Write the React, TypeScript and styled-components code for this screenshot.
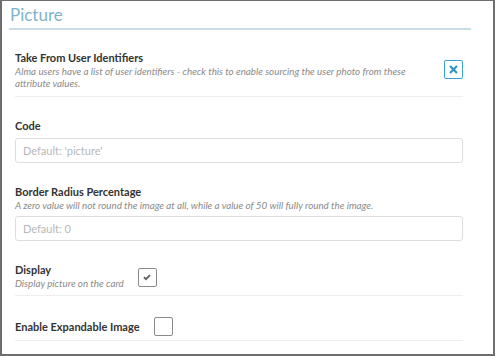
import styled, { createGlobalStyle } from "styled-components";

const GlobalStyle = createGlobalStyle`
  html, body {
    margin: 0;
    padding: 0;
    background: #ffffff;
  }
  * {
    box-sizing: border-box;
  }
`;

const Frame = styled.div`
  width: 495px;
  height: 356px;
  border: 1px solid #6e6e6e;
  border-left-width: 2px;
  border-right-width: 2px;
  border-bottom-width: 2px;
  background: #ffffff;
  font-family: Lato, "Open Sans", sans-serif;
  color: #333333;
  padding: 2px 22px 0 7px;
  overflow: hidden;
`;

const Title = styled.h2`
  margin: 0;
  font-size: 17px;
  font-weight: 400;
  line-height: 23px;
  color: #7fb3cb;
  padding: 0 0 2px 1px;
  border-bottom: 2px solid #c9dde6;
`;

const Body = styled.div`
  padding: 20px 8px 0 6px;
`;

// $pad: space under a ruled field before its bottom line
const Field = styled.div<{ $pad?: number }>`
  margin-bottom: 21px;
  padding-bottom: ${({ $pad }) => ($pad !== undefined ? `${$pad}px` : "0")};
  border-bottom: ${({ $pad }) => ($pad !== undefined ? "1px solid #efefef" : "none")};
`;

const Row = styled.div<{ $spread?: boolean }>`
  display: flex;
  align-items: center;
  justify-content: ${({ $spread }) => ($spread ? "space-between" : "flex-start")};
  gap: 14px;
`;

const Label = styled.div`
  font-size: 11px;
  font-weight: 700;
  line-height: 15px;
  color: #333333;
`;

const Hint = styled.div`
  font-size: 9.8px;
  font-style: italic;
  line-height: 12px;
  color: #8a8a8a;
  max-width: 400px;
`;

const Input = styled.input`
  display: block;
  width: 100%;
  height: 25px;
  margin-top: 5px;
  border: 1px solid #dedede;
  border-radius: 3px;
  padding: 0 7px;
  font-family: inherit;
  font-size: 11px;
  color: #333333;
  outline: none;
  &::placeholder {
    color: #b8b8b8;
  }
`;

const Box = styled.span<{ $accent?: boolean; $drop?: number }>`
  flex: none;
  display: inline-flex;
  align-items: center;
  justify-content: center;
  width: 19px;
  height: 19px;
  margin-top: ${({ $drop }) => ($drop ? `${$drop}px` : "0")};
  border: 1.5px solid ${({ $accent }) => ($accent ? "#3aa3d3" : "#8a8a8a")};
  border-radius: 2px;
  background: #ffffff;
`;

const CrossIcon = () => (
  <svg width="9" height="9" viewBox="0 0 10 10">
    <path d="M2 2 L8 8 M8 2 L2 8" stroke="#2f93c6" strokeWidth="2.4" strokeLinecap="square" />
  </svg>
);

const CheckIcon = () => (
  <svg width="10" height="10" viewBox="0 0 10 10">
    <path d="M2 5.3 L4 7.2 L8 3.1" stroke="#666666" strokeWidth="2" fill="none" />
  </svg>
);

export default function App() {
  return (
    <>
      <GlobalStyle />
      <Frame>
        <Title>Picture</Title>
        <Body>
          <Field $pad={7}>
            <Row $spread>
              <div>
                <Label>Take From User Identifiers</Label>
                <Hint>
                  Alma users have a list of user identifiers - check this to enable sourcing the
                  user photo from these attribute values.
                </Hint>
              </div>
              <Box $accent>
                <CrossIcon />
              </Box>
            </Row>
          </Field>
          <Field>
            <Label>Code</Label>
            <Input placeholder="Default: 'picture'" />
          </Field>
          <Field>
            <Label>Border Radius Percentage</Label>
            <Hint>
              A zero value will not round the image at all, while a value of 50 will fully round
              the image.
            </Hint>
            <Input placeholder="Default: 0" />
          </Field>
          <Field $pad={6}>
            <Row>
              <div>
                <Label>Display</Label>
                <Hint>Display picture on the card</Hint>
              </div>
              <Box $drop={3}>
                <CheckIcon />
              </Box>
            </Row>
          </Field>
          <Field $pad={4}>
            <Row>
              <Label>Enable Expandable Image</Label>
              <Box />
            </Row>
          </Field>
        </Body>
      </Frame>
    </>
  );
}
